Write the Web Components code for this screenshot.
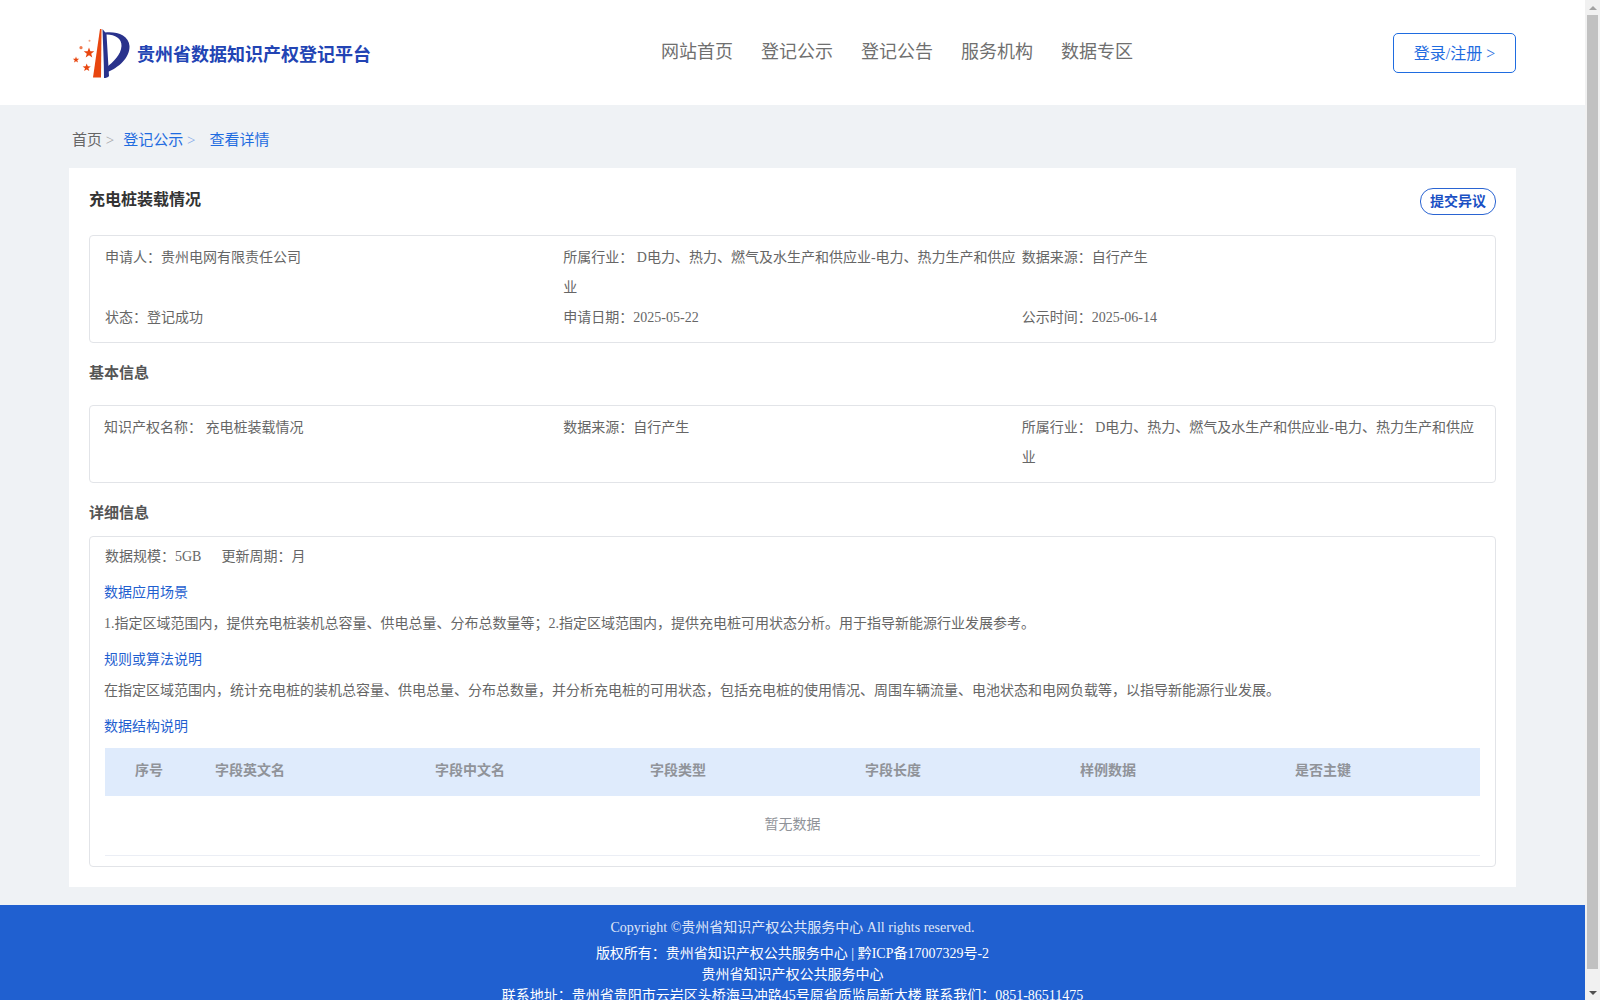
<!DOCTYPE html>
<html lang="zh">
<head>
<meta charset="utf-8">
<title>贵州省数据知识产权登记平台</title>
<style>
  html, body { margin: 0; height: 1000px; overflow: hidden; }
  body {
    background: #eff2f5;
    color: #666;
    font-family: "Liberation Serif", "Noto Sans CJK SC", serif;
    font-size: 14px;
    padding-right: 15px;
  }
  .page { padding: 0 69px 0 69px; }
</style>
</head>
<body>
<site-header></site-header>
<div class="page">
  <bread-crumb></bread-crumb>
  <detail-card heading="充电桩装载情况">
    <info-box>
      <info-item>申请人：贵州电网有限责任公司</info-item>
      <info-item>所属行业： D电力、热力、燃气及水生产和供应业-电力、热力生产和供应业</info-item>
      <info-item>数据来源：自行产生</info-item>
      <info-item>状态：登记成功</info-item>
      <info-item>申请日期：2025-05-22</info-item>
      <info-item>公示时间：2025-06-14</info-item>
    </info-box>
    <section-title>基本信息</section-title>
    <info-box>
      <info-item style="margin-left:-1px">知识产权名称： 充电桩装载情况</info-item>
      <info-item>数据来源：自行产生</info-item>
      <info-item>所属行业： D电力、热力、燃气及水生产和供应业-电力、热力生产和供应业</info-item>
    </info-box>
    <section-title tight>详细信息</section-title>
    <detail-box></detail-box>
  </detail-card>
</div>
<site-footer></site-footer>
<page-scrollbar></page-scrollbar>

<script>
class SiteHeader extends HTMLElement {
  connectedCallback() {
    this.attachShadow({ mode: "open" });
    this.shadowRoot.innerHTML = `
      <style>
        :host {
          display: grid;
          grid-template-columns: 592px 1fr auto;
          align-items: center;
          height: 105px;
          background: #fff;
          padding: 0 69px 0 72px;
        }
        .logo { display: flex; align-items: center; gap: 7px; margin-top: 1px; }
        .logo svg { display: block; flex: none; }
        .logo b { font-size: 18px; color: #2244b4; line-height: 24px; margin-top: 3px; }
        nav { display: flex; gap: 28px; margin-top: -1px; margin-left: -3px; }
        nav a { font-size: 18px; line-height: 24px; color: #6f6f6f; }
        .login {
          width: 123px;
          height: 40px;
          box-sizing: border-box;
          border: 1px solid #1f6ce0;
          border-radius: 5px;
          color: #1f6ce0;
          font-size: 16px;
          display: flex;
          align-items: center;
          justify-content: center;
          margin-top: 1px;
          padding-bottom: 2px;
        }
      </style>
      <div class="logo">
        <svg width="58" height="50" viewBox="72 28 58 50" aria-hidden="true">
          <path d="M100 29 L101.5 29 L101 77.5 L93 77.5 Z" fill="#e8460f"/>
          <path d="M102.5 29 C103 45 104 62 104 78 C106 78 108 77.5 109 76 L106.5 34 Z" fill="#29328c"/>
          <path d="M105 32.500 C116 31 129 35 129.500 46 C130 58 118 68 107.500 72 L107 67 C113 62 121 55 121.500 46 C122 38 114 34 105.500 34.500 Z" fill="#29328c"/>
          <polygon points="89,47.5 90.400,51.200 94.300,51.300 91.200,53.700 92.300,57.500 89,55.300 85.700,57.500 86.800,53.700 83.700,51.300 87.600,51.200" fill="#e8460f"/>
          <polygon points="76,56.500 76.800,58.700 79.200,58.800 77.300,60.200 78,62.500 76,61.200 74,62.500 74.700,60.200 72.800,58.800 75.200,58.700" fill="#e8460f"/>
          <polygon points="86.700,63.500 87.800,66.300 90.800,66.400 88.400,68.200 89.300,71.100 86.700,69.400 84.100,71.100 85,68.200 82.600,66.400 85.600,66.300" fill="#e8460f"/>
          <circle cx="81" cy="47.700" r="1.600" fill="#ee7a50"/>
          <circle cx="89.500" cy="40.700" r="1" fill="#f0a080"/>
        </svg>
        <b>贵州省数据知识产权登记平台</b>
      </div>
      <nav>
        <a>网站首页</a><a>登记公示</a><a>登记公告</a><a>服务机构</a><a>数据专区</a>
      </nav>
      <div class="login">登录/注册 &gt;</div>
    `;
  }
}

class BreadCrumb extends HTMLElement {
  connectedCallback() {
    this.attachShadow({ mode: "open" });
    this.shadowRoot.innerHTML = `
      <style>
        :host {
          display: flex;
          height: 63px;
          box-sizing: border-box;
          padding: 20px 0 0 3px;
          font-size: 15px;
          line-height: 30px;
          color: #666;
        }
        span { white-space: pre; }
        .gt { opacity: .55; }
        .link { color: #1f6ce0; margin-left: 9px; }
        .link.last { margin-left: 14px; }
      </style>
      <span>首页 <span class="gt">&gt;</span></span>
      <span class="link">登记公示 <span class="gt">&gt;</span></span>
      <span class="link last">查看详情</span>
    `;
  }
}

class DetailCard extends HTMLElement {
  connectedCallback() {
    this.attachShadow({ mode: "open" });
    this.shadowRoot.innerHTML = `
      <style>
        :host {
          display: block;
          background: #fff;
          padding: 20px 20px 20px;
        }
        .top {
          display: flex;
          justify-content: space-between;
          align-items: center;
          height: 27px;
          margin-bottom: 20px;
        }
        h1 { margin: 0 0 3px 0; font-size: 16px; line-height: 24px; color: #333; }
        button {
          width: 76px;
          height: 27px;
          padding: 0 0 4px;
          font: inherit;
          font-size: 14px;
          font-weight: 700;
          background: #fff;
          color: #1a50c4;
          border: 1px solid #2a64d2;
          border-radius: 13px;
        }
      </style>
      <div class="top">
        <h1>${this.getAttribute("heading")}</h1>
        <button>提交异议</button>
      </div>
      <slot></slot>
    `;
  }
}

class InfoBox extends HTMLElement {
  connectedCallback() {
    this.attachShadow({ mode: "open" });
    this.shadowRoot.innerHTML = `
      <style>
        :host {
          display: grid;
          grid-template-columns: repeat(3, 1fr);
          border: 1px solid #e2e4e8;
          border-radius: 4px;
          padding: 7px 15px 9px;
          line-height: 30px;
        }
      </style>
      <slot></slot>
    `;
  }
}

class InfoItem extends HTMLElement {
  connectedCallback() {
    this.attachShadow({ mode: "open" });
    this.shadowRoot.innerHTML = `
      <style>
        :host { display: block; min-width: 0; line-height: 30px; }
      </style>
      <slot></slot>
    `;
  }
}

class SectionTitle extends HTMLElement {
  connectedCallback() {
    this.attachShadow({ mode: "open" });
    this.shadowRoot.innerHTML = `
      <style>
        :host {
          display: block;
          font-size: 15px;
          font-weight: 700;
          line-height: 30px;
          color: #555;
          margin: 15px 0 17px;
        }
        :host([tight]) { margin-bottom: 8px; }
      </style>
      <slot></slot>
    `;
  }
}

class DetailBox extends HTMLElement {
  connectedCallback() {
    this.attachShadow({ mode: "open" });
    this.shadowRoot.innerHTML = `
      <style>
        :host {
          display: block;
          border: 1px solid #e2e4e8;
          border-radius: 4px;
          padding: 5px 15px 10px;
        }
        .meta { line-height: 30px; height: 30px; display: flex; gap: 20px; margin: 0 0 5px; }
        h3, p { margin: 0 0 0 -1px; font-size: 14px; font-weight: 400; line-height: 31px; }
        h3 { color: #1f5fd0; }
        p { margin-bottom: 5px; }
      </style>
      <div class="meta"><span>数据规模：5GB</span><span>更新周期：月</span></div>
      <h3>数据应用场景</h3>
      <p>1.指定区域范围内，提供充电桩装机总容量、供电总量、分布总数量等；2.指定区域范围内，提供充电桩可用状态分析。用于指导新能源行业发展参考。</p>
      <h3>规则或算法说明</h3>
      <p>在指定区域范围内，统计充电桩的装机总容量、供电总量、分布总数量，并分析充电桩的可用状态，包括充电桩的使用情况、周围车辆流量、电池状态和电网负载等，以指导新能源行业发展。</p>
      <h3>数据结构说明</h3>
      <data-table></data-table>
    `;
  }
}

class DataTable extends HTMLElement {
  connectedCallback() {
    this.attachShadow({ mode: "open" });
    const cols = ["序号", "字段英文名", "字段中文名", "字段类型", "字段长度", "样例数据", "是否主键"];
    this.shadowRoot.innerHTML = `
      <style>
        :host { display: block; margin-top: 6px; }
        .head {
          display: grid;
          grid-template-columns: 110px 220px 215px 215px 215px 215px 1fr;
          height: 48px;
          box-sizing: border-box;
          padding-bottom: 6px;
          align-items: center;
          background: #dfebfc;
          color: #909399;
          font-weight: 700;
        }
        .head span:first-child { text-align: center; padding-right: 22px; }
        .empty {
          height: 59px;
          line-height: 58px;
          text-align: center;
          color: #909399;
          border-bottom: 1px solid #ebeef5;
        }
      </style>
      <div class="head">${cols.map(c => `<span>${c}</span>`).join("")}</div>
      <div class="empty">暂无数据</div>
    `;
  }
}

class SiteFooter extends HTMLElement {
  connectedCallback() {
    this.attachShadow({ mode: "open" });
    this.shadowRoot.innerHTML = `
      <style>
        :host {
          display: block;
          margin-top: 18px;
          background: #2060d0;
          color: #fff;
          text-align: center;
          padding: 12px 0 10px;
          line-height: 21px;
          font-size: 14px;
        }
        div { height: 21px; }
        .copy { opacity: .85; margin-bottom: 5px; }
      </style>
      <div class="copy">Copyright ©贵州省知识产权公共服务中心 All rights reserved.</div>
      <div>版权所有：贵州省知识产权公共服务中心 | 黔ICP备17007329号-2</div>
      <div>贵州省知识产权公共服务中心</div>
      <div>联系地址：贵州省贵阳市云岩区头桥海马冲路45号原省质监局新大楼 联系我们：0851-86511475</div>
    `;
  }
}

class PageScrollbar extends HTMLElement {
  connectedCallback() {
    this.attachShadow({ mode: "open" });
    this.shadowRoot.innerHTML = `
      <style>
        :host {
          position: fixed;
          top: 0;
          right: 0;
          bottom: 0;
          width: 15px;
          background: #f1f1f1;
          display: flex;
          flex-direction: column;
          align-items: center;
        }
        .btn { height: 15px; flex: none; display: flex; align-items: center; justify-content: center; }
        .up { width: 0; height: 0; border: 4px solid transparent; border-top: 0; border-bottom: 4px solid #a3a3a3; }
        .down { width: 0; height: 0; border: 4px solid transparent; border-bottom: 0; border-top: 4px solid #505050; }
        .thumb { width: 11px; height: 954px; background: #c1c1c1; flex: none; }
        .rest { flex: 1; }
      </style>
      <div class="btn"><div class="up"></div></div>
      <div class="thumb"></div>
      <div class="rest"></div>
      <div class="btn"><div class="down"></div></div>
    `;
  }
}

customElements.define("site-header", SiteHeader);
customElements.define("bread-crumb", BreadCrumb);
customElements.define("detail-card", DetailCard);
customElements.define("info-box", InfoBox);
customElements.define("info-item", InfoItem);
customElements.define("section-title", SectionTitle);
customElements.define("detail-box", DetailBox);
customElements.define("data-table", DataTable);
customElements.define("site-footer", SiteFooter);
customElements.define("page-scrollbar", PageScrollbar);
</script>
</body>
</html>
